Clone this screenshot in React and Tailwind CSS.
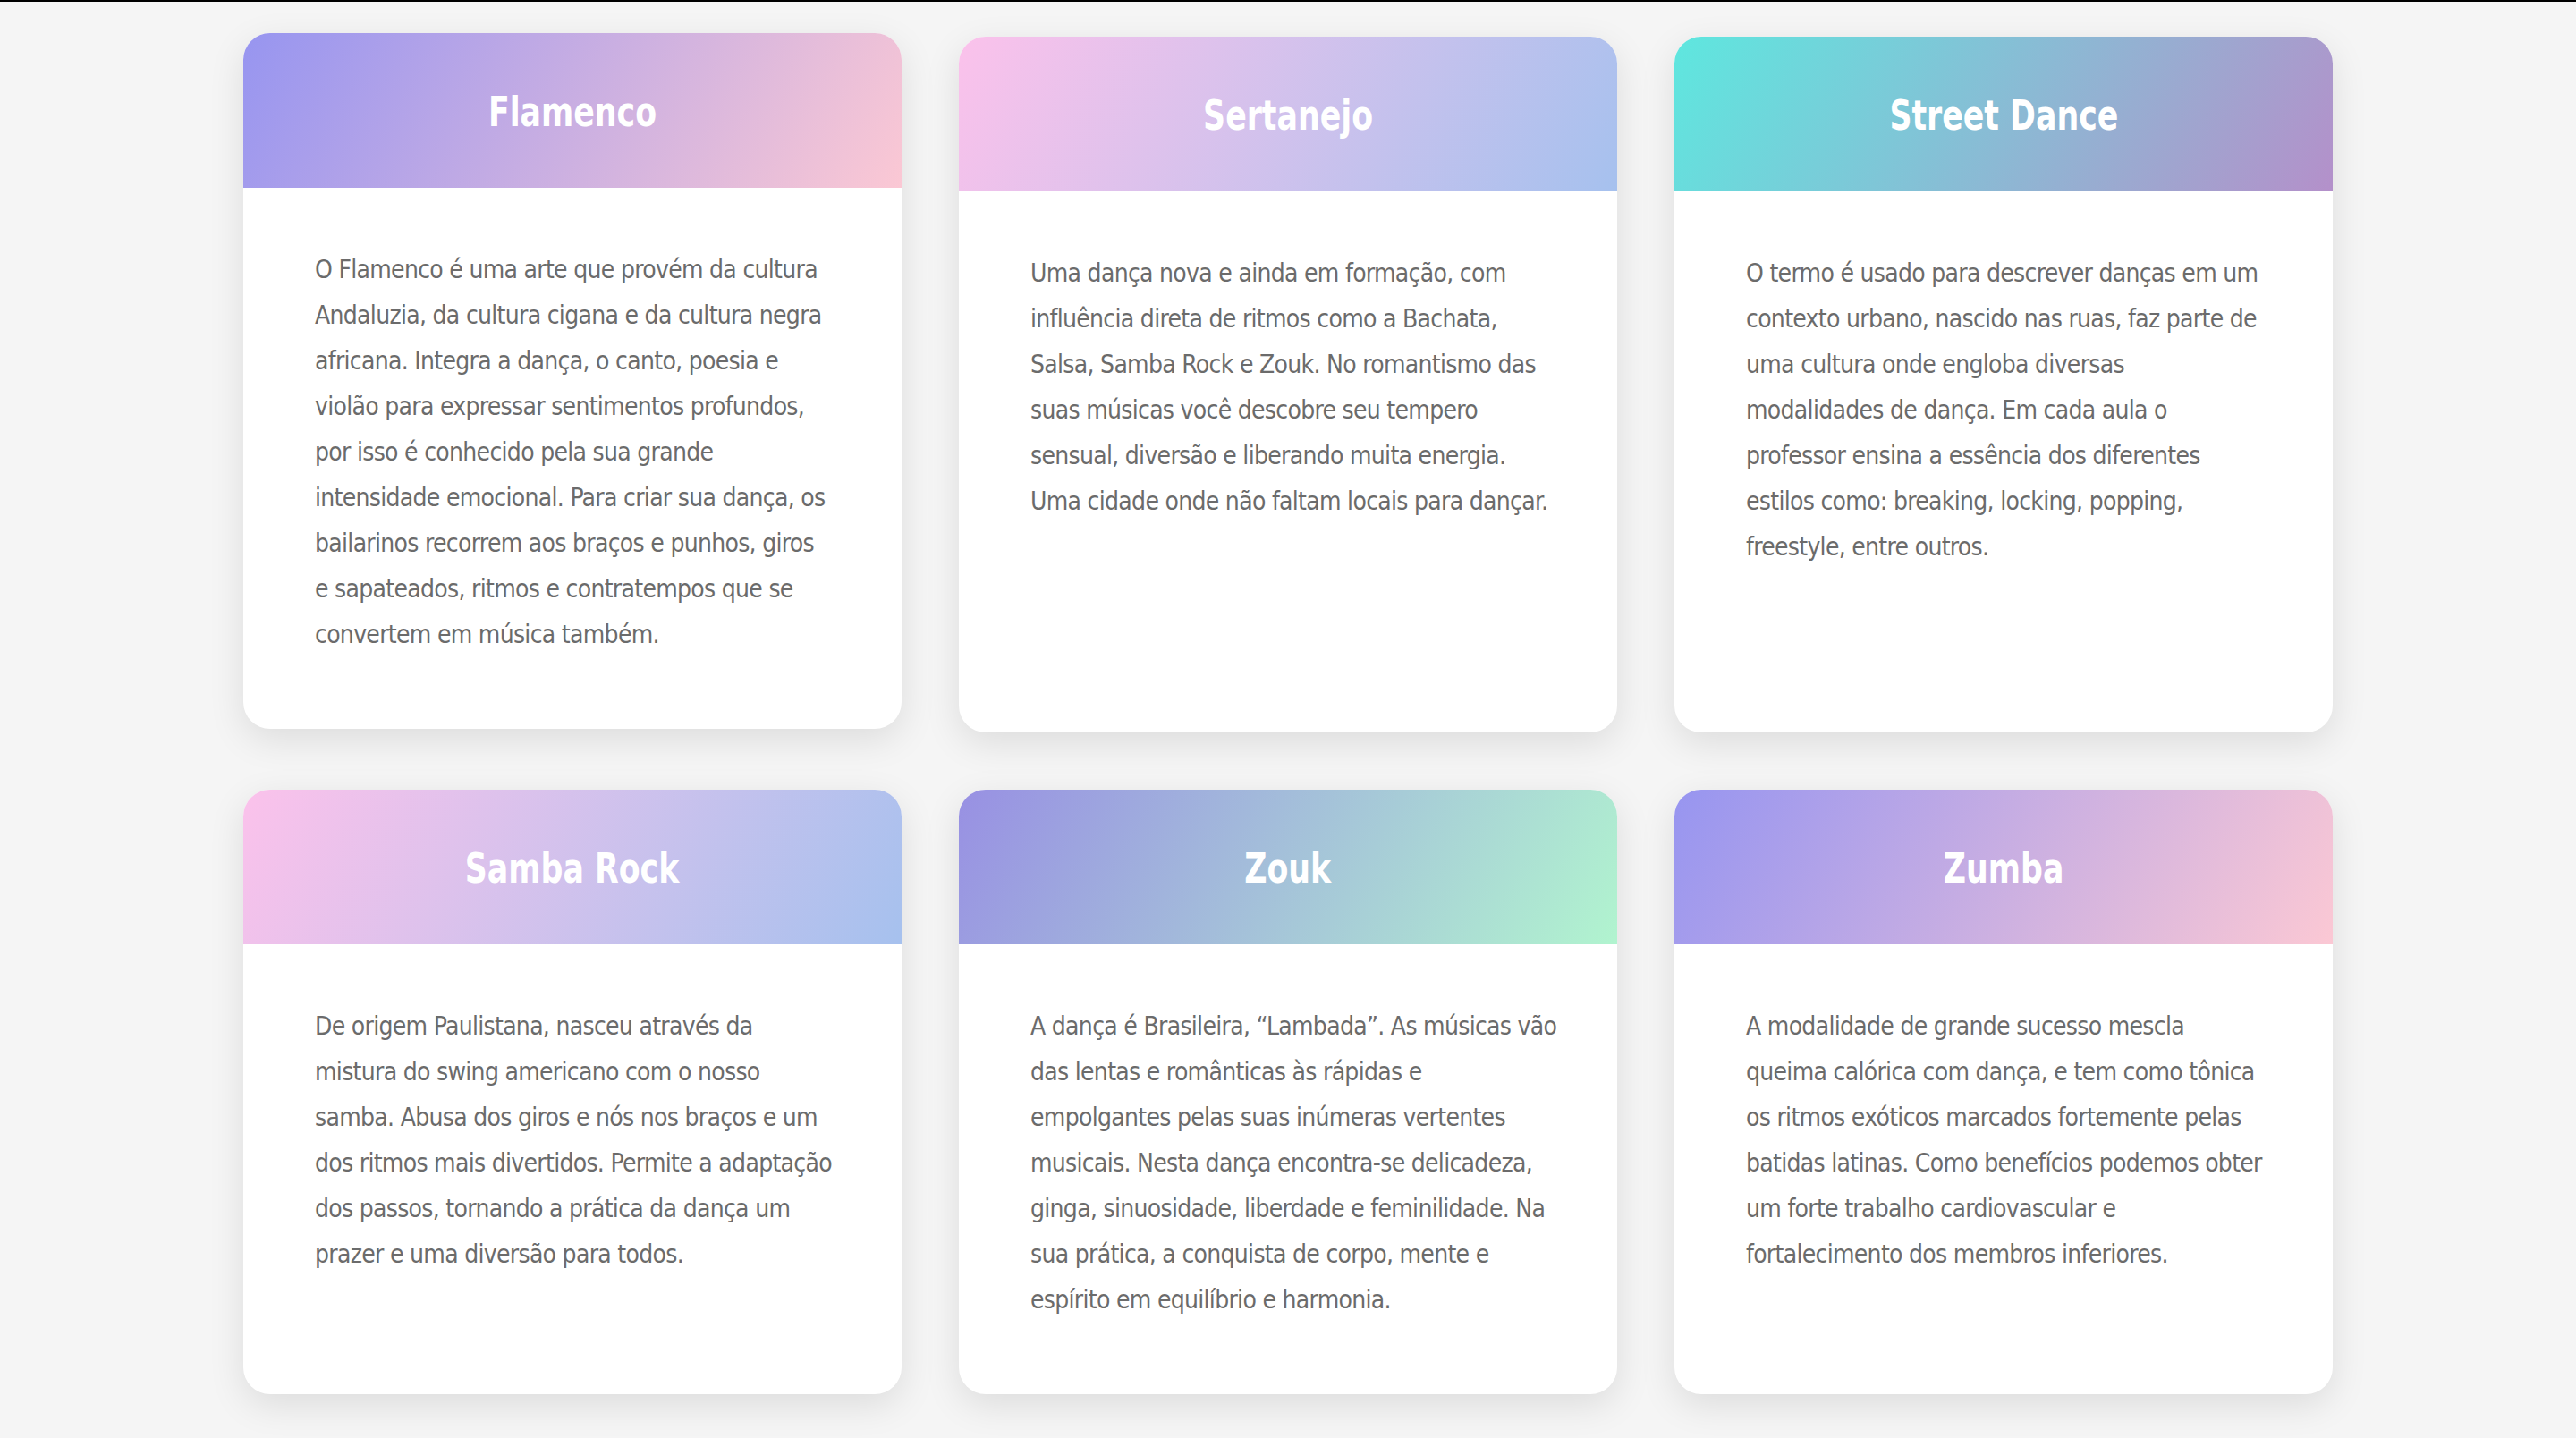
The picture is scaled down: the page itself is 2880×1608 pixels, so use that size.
import React from "react";

const cards = [
  {
    title: "Flamenco",
    grad: "bg-[linear-gradient(120deg,#9795f0_0%,#fbc8d4_100%)]",
    lift: true,
    lines: [
      "O Flamenco é uma arte que provém da cultura",
      "Andaluzia, da cultura cigana e da cultura negra",
      "africana. Integra a dança, o canto, poesia e",
      "violão para expressar sentimentos profundos,",
      "por isso é conhecido pela sua grande",
      "intensidade emocional. Para criar sua dança, os",
      "bailarinos recorrem aos braços e punhos, giros",
      "e sapateados, ritmos e contratempos que se",
      "convertem em música também.",
    ],
  },
  {
    title: "Sertanejo",
    grad: "bg-[linear-gradient(120deg,#fbc2eb_0%,#a6c1ee_100%)]",
    lines: [
      "Uma dança nova e ainda em formação, com",
      "influência direta de ritmos como a Bachata,",
      "Salsa, Samba Rock e Zouk. No romantismo das",
      "suas músicas você descobre seu tempero",
      "sensual, diversão e liberando muita energia.",
      "Uma cidade onde não faltam locais para dançar.",
    ],
  },
  {
    title: "Street Dance",
    grad: "bg-[linear-gradient(120deg,#5ee7df_0%,#b490ca_100%)]",
    lines: [
      "O termo é usado para descrever danças em um",
      "contexto urbano, nascido nas ruas, faz parte de",
      "uma cultura onde engloba diversas",
      "modalidades de dança. Em cada aula o",
      "professor ensina a essência dos diferentes",
      "estilos como: breaking, locking, popping,",
      "freestyle, entre outros.",
    ],
  },
  {
    title: "Samba Rock",
    grad: "bg-[linear-gradient(120deg,#fbc2eb_0%,#a6c1ee_100%)]",
    lines: [
      "De origem Paulistana, nasceu através da",
      "mistura do swing americano com o nosso",
      "samba. Abusa dos giros e nós nos braços e um",
      "dos ritmos mais divertidos. Permite a adaptação",
      "dos passos, tornando a prática da dança um",
      "prazer e uma diversão para todos.",
    ],
  },
  {
    title: "Zouk",
    grad: "bg-[linear-gradient(120deg,#9890e3_0%,#b1f4cf_100%)]",
    lines: [
      "A dança é Brasileira, “Lambada”. As músicas vão",
      "das lentas e românticas às rápidas e",
      "empolgantes pelas suas inúmeras vertentes",
      "musicais. Nesta dança encontra-se delicadeza,",
      "ginga, sinuosidade, liberdade e feminilidade. Na",
      "sua prática, a conquista de corpo, mente e",
      "espírito em equilíbrio e harmonia.",
    ],
  },
  {
    title: "Zumba",
    grad: "bg-[linear-gradient(120deg,#9795f0_0%,#fbc8d4_100%)]",
    lines: [
      "A modalidade de grande sucesso mescla",
      "queima calórica com dança, e tem como tônica",
      "os ritmos exóticos marcados fortemente pelas",
      "batidas latinas. Como benefícios podemos obter",
      "um forte trabalho cardiovascular e",
      "fortalecimento dos membros inferiores.",
    ],
  },
];

function Card({ title, grad, lines, lift }) {
  return (
    <div
      className={
        "flex flex-col bg-white rounded-[30px] overflow-hidden shadow-[0_12px_40px_rgba(0,0,0,0.10)] " +
        (lift ? "-translate-y-[4px]" : "")
      }
    >
      <div className={"h-[173px] flex items-center justify-center shrink-0 " + grad}>
        <h2 className="inline-block text-white text-[46px] font-bold leading-none scale-x-[0.84] translate-y-[1px]">
          {title}
        </h2>
      </div>
      <div className="px-[80px] pt-[66px] pb-[80px] text-[28px] leading-[51px] tracking-[-0.7px] text-[#6b6b6b]">
        {lines.map((l, i) => (
          <div key={i} className="whitespace-nowrap">
            {l}
          </div>
        ))}
      </div>
    </div>
  );
}

export default function App() {
  return (
    <div className="min-h-[1608px] bg-[#f5f5f5] font-['DejaVu_Sans_Condensed','DejaVu_Sans',sans-serif]">
      <div className="h-[2px] bg-black" />
      <div className="w-[2336px] mx-auto pt-[39px] pb-[50px] grid grid-cols-3 gap-[64px]">
        {cards.map((c) => (
          <Card key={c.title} {...c} />
        ))}
      </div>
    </div>
  );
}
